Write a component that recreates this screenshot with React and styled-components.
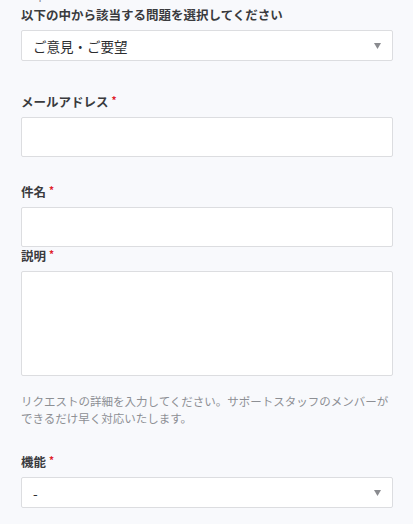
import React from "react";
import styled, { createGlobalStyle } from "styled-components";

const Global = createGlobalStyle`
  html, body { margin: 0; padding: 0; background: #f8f9fc; }
  body { font-family: "Noto Sans CJK JP", "Noto Sans", sans-serif; overflow: hidden; }
`;

const Page = styled.div`
  padding: 0 20px 0 21px;
  width: 413px;
  box-sizing: border-box;
`;

const Hint = styled.p`
  margin: ${(p) => p.$mt || 0}px 0 0;
  font-size: 11.5px;
  line-height: 17px;
  color: #8d8f94;
  letter-spacing: 0;
`;

const Field = styled.div`
  display: flex;
  flex-direction: column;
  margin-top: ${(p) => p.$mt}px;
`;

const Label = styled.label`
  font-size: 12.5px;
  line-height: 18px;
  font-weight: 700;
  color: #3a3b3e;
  margin-bottom: 6px;
  display: flex;
  align-items: flex-start;
`;

const Req = styled.span`
  color: #e0202a;
  font-size: 10px;
  line-height: 10px;
  margin-left: 3px;
  margin-top: 2px;
`;

const SelectBox = styled.div`
  height: 31px;
  box-sizing: border-box;
  background: #fff;
  border: 1px solid #dcdde0;
  border-radius: 2px;
  display: flex;
  align-items: center;
  justify-content: space-between;
  padding: 0 11px 0 11px;
  font-size: 13.5px;
  color: #2c2d30;
`;

const Input = styled.div`
  height: ${(p) => p.$h}px;
  box-sizing: border-box;
  background: #fff;
  border: 1px solid #dcdde0;
  border-radius: 2px;
`;

const Arrow = () => (
  <svg width="7" height="6" viewBox="0 0 7 6">
    <path d="M0 0 H7 L3.5 6 Z" fill="#8a8b8f" />
  </svg>
);

export default function App() {
  return (
    <Page>
      <Global />
      <Hint $mt={-14}>Required field</Hint>
      <Field $mt={3}>
        <Label>以下の中から該当する問題を選択してください</Label>
        <SelectBox>
          <span>ご意見・ご要望</span>
          <Arrow />
        </SelectBox>
      </Field>
      <Field $mt={32}>
        <Label>
          メールアドレス<Req>*</Req>
        </Label>
        <Input $h={40} />
      </Field>
      <Field $mt={26}>
        <Label>
          件名<Req>*</Req>
        </Label>
        <Input $h={40} />
      </Field>
      <Field $mt={0}>
        <Label>
          説明<Req>*</Req>
        </Label>
        <Input $h={105} />
      </Field>
      <Hint $mt={17}>
        リクエストの詳細を入力してください。サポートスタッフのメンバーができるだけ早く対応いたします。
      </Hint>
      <Field $mt={26}>
        <Label>
          機能<Req>*</Req>
        </Label>
        <SelectBox>
          <span>-</span>
          <Arrow />
        </SelectBox>
      </Field>
    </Page>
  );
}
